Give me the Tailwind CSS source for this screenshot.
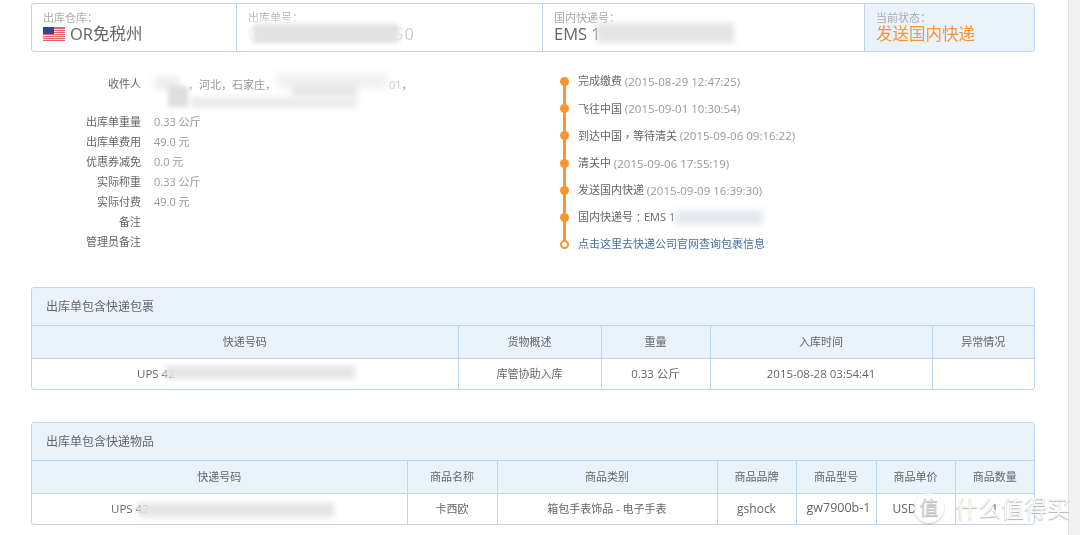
<!DOCTYPE html>
<html lang="zh-CN">
<head>
    <meta charset="UTF-8">
    <title>出库单详情</title>
    <script src="https://cdn.jsdelivr.net/npm/@tailwindcss/browser@4"></script>
</head>
<body class="bg-white overflow-hidden font-['Open_Sans','Noto_Sans_CJK_SC',sans-serif] text-[11px] text-[#666]">
<div class="relative flex w-[1080px] h-[535px] overflow-hidden">
    <main class="relative w-[1068px] h-full pl-[31px] pr-[33px] pt-[3px] blur-[0.35px]">

        <!-- top summary bar -->
        <div class="flex h-[49px] border border-[#bcd6ef] rounded-[3px] overflow-hidden">
            <div class="w-[205px] pl-[11px] pt-[6px] border-r border-[#bcd6ef]">
                <p class="leading-[14px] text-[#aaa]">出库仓库<span class="font-['Noto_Sans_CJK_TC']">：</span></p>
                <p class="flex items-center gap-[5px] text-[16.5px] leading-[18px] text-[#666]">
                    <svg width="22" height="14" viewBox="0 0 22 14">
                        <rect width="22" height="14" fill="#e8606f"/>
                        <rect y="2" width="22" height="1" fill="#f8dfe2"/>
                        <rect y="4" width="22" height="1" fill="#f8dfe2"/>
                        <rect y="6" width="22" height="1" fill="#f8dfe2"/>
                        <rect y="8" width="22" height="1" fill="#f8dfe2"/>
                        <rect y="10" width="22" height="1" fill="#f8dfe2"/>
                        <rect y="12" width="22" height="1" fill="#f8dfe2"/>
                        <rect width="11" height="7" fill="#2a4a8f"/>
                    </svg>
                    OR免税州
                </p>
            </div>
            <div class="w-[306px] pl-[11px] pt-[6px] border-r border-[#bcd6ef]">
                <p class="leading-[14px] text-[#aaa]">出库单号<span class="font-['Noto_Sans_CJK_TC']">：</span></p>
                <p class="text-[16.5px] leading-[18px] tracking-[1px] text-[#ccc]">0000000000000050</p>
            </div>
            <div class="w-[322px] pl-[11px] pt-[6px] border-r border-[#bcd6ef]">
                <p class="leading-[14px] text-[#aaa]">国内快递号<span class="font-['Noto_Sans_CJK_TC']">：</span></p>
                <p class="text-[16.5px] leading-[18px] text-[#666]">EMS 1</p>
            </div>
            <div class="flex-1 pl-[11px] pt-[6px] bg-[#eaf2fb]">
                <p class="leading-[14px] text-[#aaa]">当前状态<span class="font-['Noto_Sans_CJK_TC']">：</span></p>
                <p class="text-[16.5px] leading-[18px] text-[#fb9433]">发送国内快递</p>
            </div>
        </div>

        <!-- order info and timeline -->
        <div class="flex h-[235px]">
            <dl class="w-[534px] pt-[23px]">
                <div class="flex h-[37px] leading-[18px]">
                    <dt class="w-[110px] text-right">收件人</dt>
                    <dd class="w-[270px] ml-[13px] pl-[34px] text-[#999] whitespace-nowrap"><span class="font-['Noto_Sans_CJK_TC']">，</span>河北<span class="font-['Noto_Sans_CJK_TC']">，</span>石家庄<span class="font-['Noto_Sans_CJK_TC']">，</span><span class="ml-[113px] text-[#ccc]">01</span><span class="font-['Noto_Sans_CJK_TC']">，</span></dd>
                </div>
                <div class="flex flex-col">
                    <div class="flex h-[20px] items-center"><dt class="w-[110px] text-right">出库单重量</dt><dd class="ml-[13px] text-[#999]">0.33 公斤</dd></div>
                    <div class="flex h-[20px] items-center"><dt class="w-[110px] text-right">出库单费用</dt><dd class="ml-[13px] text-[#999]">49.0 元</dd></div>
                    <div class="flex h-[20px] items-center"><dt class="w-[110px] text-right">优惠券减免</dt><dd class="ml-[13px] text-[#999]">0.0 元</dd></div>
                    <div class="flex h-[20px] items-center"><dt class="w-[110px] text-right">实际称重</dt><dd class="ml-[13px] text-[#999]">0.33 公斤</dd></div>
                    <div class="flex h-[20px] items-center"><dt class="w-[110px] text-right">实际付费</dt><dd class="ml-[13px] text-[#999]">49.0 元</dd></div>
                    <div class="flex h-[20px] items-center"><dt class="w-[110px] text-right">备注</dt></div>
                    <div class="flex h-[20px] items-center"><dt class="w-[110px] text-right">管理员备注</dt></div>
                </div>
            </dl>
            <ol class="relative pt-[16px]">
                <span class="absolute left-[-2px] top-[28px] w-[3px] h-[164px] bg-[#fb9433]"></span>
                <li class="relative flex items-center h-[27.2px] pl-[13px]"><span class="absolute left-[-5px] w-[9px] h-[9px] rounded-full bg-[#fb9433]"></span>完成缴费&nbsp;<span class="text-[#999] text-[11.5px]">(2015-08-29 12:47:25)</span></li>
                <li class="relative flex items-center h-[27.2px] pl-[13px]"><span class="absolute left-[-5px] w-[9px] h-[9px] rounded-full bg-[#fb9433]"></span>飞往中国&nbsp;<span class="text-[#999] text-[11.5px]">(2015-09-01 10:30:54)</span></li>
                <li class="relative flex items-center h-[27.2px] pl-[13px]"><span class="absolute left-[-5px] w-[9px] h-[9px] rounded-full bg-[#fb9433]"></span>到达中国<span class="font-['Noto_Sans_CJK_TC']">，</span>等待清关&nbsp;<span class="text-[#999] text-[11.5px]">(2015-09-06 09:16:22)</span></li>
                <li class="relative flex items-center h-[27.2px] pl-[13px]"><span class="absolute left-[-5px] w-[9px] h-[9px] rounded-full bg-[#fb9433]"></span>清关中&nbsp;<span class="text-[#999] text-[11.5px]">(2015-09-06 17:55:19)</span></li>
                <li class="relative flex items-center h-[27.2px] pl-[13px]"><span class="absolute left-[-5px] w-[9px] h-[9px] rounded-full bg-[#fb9433]"></span>发送国内快递&nbsp;<span class="text-[#999] text-[11.5px]">(2015-09-09 16:39:30)</span></li>
                <li class="relative flex items-center h-[27.2px] pl-[13px]"><span class="absolute left-[-5px] w-[9px] h-[9px] rounded-full bg-[#fb9433]"></span>国内快递号<span class="font-['Noto_Sans_CJK_TC']">：</span>EMS 1</li>
                <li class="relative flex items-center h-[27.2px] pl-[13px] text-[#44729f]"><span class="absolute left-[-5px] w-[9px] h-[9px] rounded-full bg-white border-[2px] border-[#fb9433]"></span>点击这里去快递公司官网查询包裹信息</li>
            </ol>
        </div>

        <!-- packages -->
        <section class="border border-[#bcd6ef] rounded-[3px] overflow-hidden">
            <h2 class="h-[38px] flex items-center pl-[14px] bg-[#eaf2fb] border-b border-[#bcd6ef] text-[12px] font-normal">出库单包含快递包裹</h2>
            <table class="w-full table-fixed border-collapse text-center">
                <colgroup>
                    <col class="w-[426px]"><col class="w-[143px]"><col class="w-[109px]"><col class="w-[222px]"><col>
                </colgroup>
                <thead>
                    <tr class="h-[32px] bg-[#eaf2fb]">
                        <th class="font-normal border-r border-b border-[#bcd6ef]">快递号码</th>
                        <th class="font-normal border-r border-b border-[#bcd6ef]">货物概述</th>
                        <th class="font-normal border-r border-b border-[#bcd6ef]">重量</th>
                        <th class="font-normal border-r border-b border-[#bcd6ef]">入库时间</th>
                        <th class="font-normal border-b border-[#bcd6ef]">异常情况</th>
                    </tr>
                </thead>
                <tbody>
                    <tr class="h-[31px]">
                        <td class="border-r border-[#bcd6ef] text-left pl-[105px] text-[11.5px]">UPS 42</td>
                        <td class="border-r border-[#bcd6ef]">库管协助入库</td>
                        <td class="border-r border-[#bcd6ef] text-[11.5px]">0.33 公斤</td>
                        <td class="border-r border-[#bcd6ef] text-[11.5px]">2015-08-28 03:54:41</td>
                        <td></td>
                    </tr>
                </tbody>
            </table>
        </section>

        <!-- items -->
        <section class="mt-[32px] border border-[#bcd6ef] rounded-[3px] overflow-hidden">
            <h2 class="h-[38px] flex items-center pl-[14px] bg-[#eaf2fb] border-b border-[#bcd6ef] text-[12px] font-normal">出库单包含快递物品</h2>
            <table class="w-full table-fixed border-collapse text-center">
                <colgroup>
                    <col class="w-[375px]"><col class="w-[90px]"><col class="w-[220px]"><col class="w-[79px]"><col class="w-[80px]"><col class="w-[79px]"><col>
                </colgroup>
                <thead>
                    <tr class="h-[32px] bg-[#eaf2fb]">
                        <th class="font-normal border-r border-b border-[#bcd6ef]">快递号码</th>
                        <th class="font-normal border-r border-b border-[#bcd6ef]">商品名称</th>
                        <th class="font-normal border-r border-b border-[#bcd6ef]">商品类别</th>
                        <th class="font-normal border-r border-b border-[#bcd6ef]">商品品牌</th>
                        <th class="font-normal border-r border-b border-[#bcd6ef]">商品型号</th>
                        <th class="font-normal border-r border-b border-[#bcd6ef]">商品单价</th>
                        <th class="font-normal border-b border-[#bcd6ef]">商品数量</th>
                    </tr>
                </thead>
                <tbody>
                    <tr class="h-[31px]">
                        <td class="border-r border-[#bcd6ef] text-left pl-[79px] text-[11.5px]">UPS 42</td>
                        <td class="border-r border-[#bcd6ef]">卡西欧</td>
                        <td class="border-r border-[#bcd6ef]">箱包手表饰品 - 电子手表</td>
                        <td class="border-r border-[#bcd6ef] text-[12px]">gshock</td>
                        <td class="border-r border-[#bcd6ef] text-[12.5px] pl-[5px]">gw7900b-1</td>
                        <td class="border-r border-[#bcd6ef] text-left pl-[16px] text-[12px]">USD</td>
                        <td class="text-[12px]">1</td>
                    </tr>
                </tbody>
            </table>
        </section>
    </main>

    <!-- scrollbar track -->
    <div class="w-[12px] h-full bg-[#f1f1f1] border-l border-[#e4e4e4]"></div>

    <!-- privacy smudges laid over the text -->
    <div class="absolute left-[244px] top-[20px] w-[155px] h-[27px] bg-white/90 blur-[4px]"></div>
    <div class="absolute left-[253px] top-[24px] w-[146px] h-[19px] bg-[#e2e2e2] blur-[2px]"></div>
    <div class="absolute left-[596px] top-[23px] w-[138px] h-[20px] bg-[#e4e4e4] blur-[3px]"></div>
    <div class="absolute left-[152px] top-[72px] w-[36px] h-[38px] bg-white/90 blur-[4px]"></div>
    <div class="absolute left-[154px] top-[76px] w-[26px] h-[14px] bg-[#eeeeee] blur-[3px]"></div>
    <div class="absolute left-[168px] top-[86px] w-[20px] h-[21px] bg-[#dedede] blur-[2px]"></div>
    <div class="absolute left-[276px] top-[74px] w-[112px] h-[14px] bg-[#f0f0f0] blur-[4px]"></div>
    <div class="absolute left-[292px] top-[85px] w-[65px] h-[12px] bg-[#e6e6e6] blur-[3px]"></div>
    <div class="absolute left-[190px] top-[97px] w-[167px] h-[11px] bg-[#ebebeb] blur-[3px]"></div>
    <div class="absolute left-[675px] top-[210px] w-[88px] h-[15px] bg-[#e6e9ee] blur-[3px]"></div>
    <div class="absolute left-[165px] top-[366px] w-[190px] h-[13px] bg-[#e4e4e4] blur-[3px]"></div>
    <div class="absolute left-[138px] top-[503px] w-[196px] h-[14px] bg-[#e4e4e4] blur-[3px]"></div>

    <!-- watermark -->
    <div class="absolute left-[914px] top-[493px] flex items-center gap-[11px] text-[#f8f8f8] [text-shadow:0_1px_1px_rgba(0,0,0,0.3)]">
        <span class="flex items-center justify-center w-[30px] h-[30px] rounded-full bg-white/75 shadow-[0_1px_2px_rgba(0,0,0,0.25)] text-[19px] text-[#d4d4d4]">值</span>
        <span class="text-[23px] leading-[28px] whitespace-nowrap">什么值得买</span>
    </div>
</div>
</body>
</html>
